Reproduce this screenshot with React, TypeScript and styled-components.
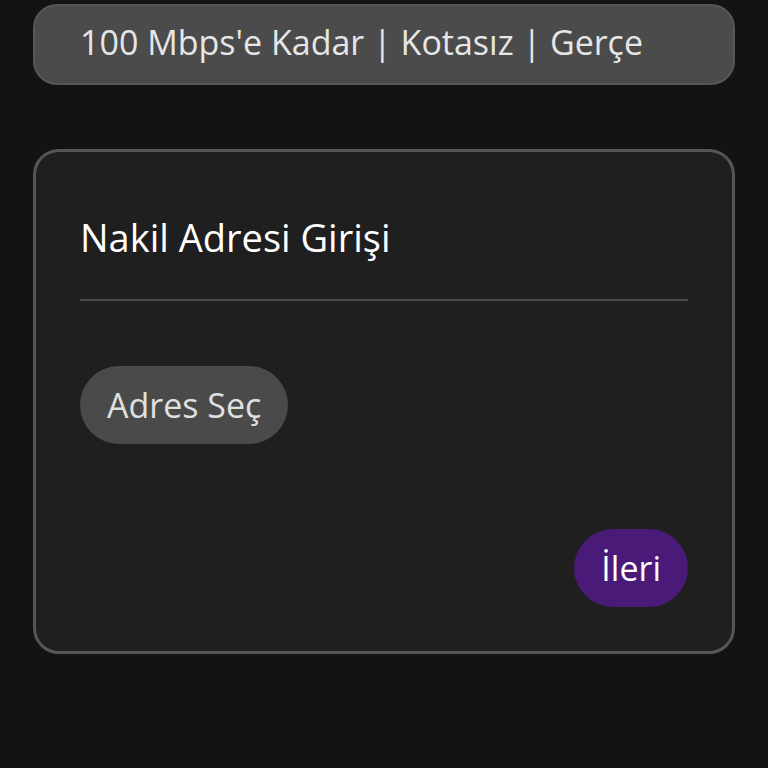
import React from "react";
import styled, { createGlobalStyle } from "styled-components";

const GlobalStyle = createGlobalStyle`
  html, body {
    margin: 0;
    padding: 0;
    background-color: #131313;
    font-family: "Open Sans", "Noto Sans", sans-serif;
  }
`;

const Page = styled.div`
  min-height: 768px;
  box-sizing: border-box;
  padding: 4px 33px 0 33px;
  display: flex;
  flex-direction: column;
  gap: 64px;
`;

const InfoBar = styled.div`
  height: 81px;
  box-sizing: border-box;
  border: 2px solid #575757;
  border-radius: 24px;
  background-color: #4b4b4b;
  display: flex;
  align-items: flex-start;
  padding: 19px 0 0 45px;
  overflow: hidden;
  white-space: nowrap;
`;

const InfoText = styled.span`
  color: #e6e6e6;
  font-size: 34px;
  line-height: 1;
`;

const Card = styled.div`
  height: 505px;
  box-sizing: border-box;
  border: 3px solid #565656;
  border-radius: 26px;
  background-color: #1f1f1f;
  padding: 66px 44px 44px 44px;
  display: flex;
  flex-direction: column;
`;

const Title = styled.h2`
  margin: 0;
  color: #ffffff;
  font-size: 38px;
  font-weight: 400;
  line-height: 1;
`;

const Divider = styled.hr`
  margin: 43px 0 0 0;
  border: none;
  height: 2px;
  background-color: #4a4a4a;
`;

const Footer = styled.div`
  margin-top: auto;
  display: flex;
  justify-content: flex-end;
`;

const PillButton = styled.button<{ $variant: "neutral" | "primary" }>`
  height: 78px;
  border: none;
  border-radius: 39px;
  padding: 0 27px;
  font-family: "Open Sans", "Noto Sans", sans-serif;
  font-size: 34px;
  line-height: 1;
  cursor: pointer;
  background-color: ${(p) => (p.$variant === "primary" ? "#4a1a78" : "#4a4a4a")};
  color: ${(p) => (p.$variant === "primary" ? "#ffffff" : "#e0e0e0")};
`;

const SelectButton = styled(PillButton)`
  align-self: flex-start;
  margin-top: 65px;
`;

export default function App() {
  return (
    <>
      <GlobalStyle />
      <Page>
        <InfoBar>
          <InfoText>100 Mbps'e Kadar | Kotasız | Gerçe</InfoText>
        </InfoBar>
        <Card>
          <Title>Nakil Adresi Girişi</Title>
          <Divider />
          <SelectButton $variant="neutral">Adres Seç</SelectButton>
          <Footer>
            <PillButton $variant="primary">İleri</PillButton>
          </Footer>
        </Card>
      </Page>
    </>
  );
}
